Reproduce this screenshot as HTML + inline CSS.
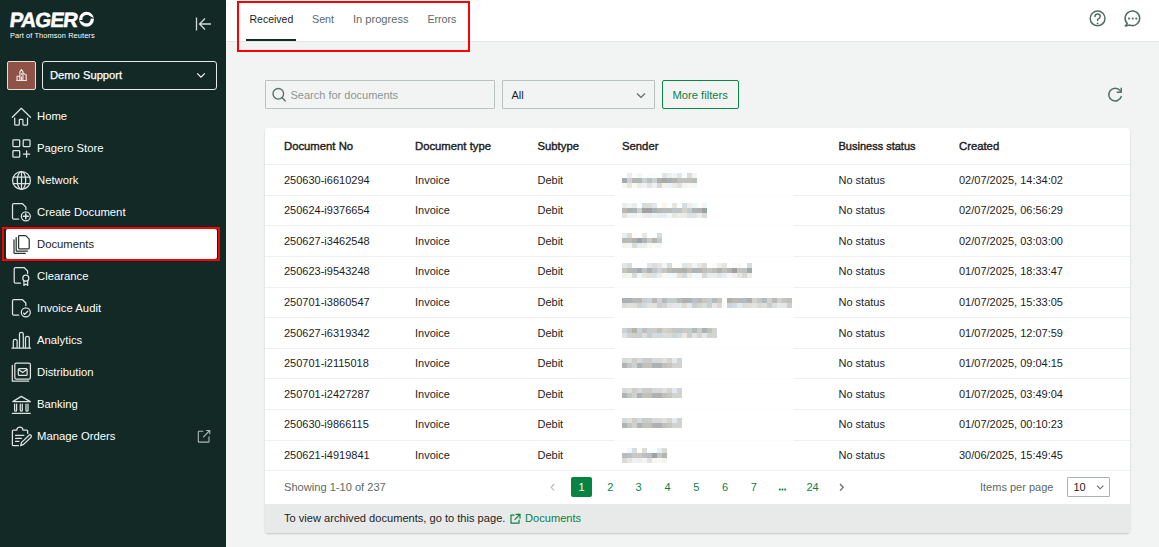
<!DOCTYPE html>
<html><head><meta charset="utf-8">
<style>
*{box-sizing:border-box;margin:0;padding:0}
html,body{width:1159px;height:547px;overflow:hidden}
body{background:#f2f4f3;font-family:"Liberation Sans",sans-serif;font-size:11px;color:#1d1d1d;position:relative}
.abs{position:absolute}
#side{position:absolute;left:0;top:0;width:226px;height:547px;background:#122926}
.nav{position:absolute;left:37px;color:#fff;font-size:11.3px;line-height:14px;white-space:nowrap}
#hdr{position:absolute;left:226px;top:0;width:933px;height:42px;background:#fff;border-bottom:1px solid #e2e6e4}
.tab{position:absolute;top:12px;font-size:11.2px;line-height:14px;color:#5d6a66;white-space:nowrap}
.th{position:absolute;top:139px;font-weight:normal;font-size:11.3px;line-height:14px;color:#1d1d1d;white-space:nowrap;-webkit-text-stroke:0.4px #1d1d1d}
.td{position:absolute;font-size:11px;line-height:14px;color:#1d1d1d;white-space:nowrap}
.sep{position:absolute;left:265px;width:865px;height:1px;background:#eef0ef}
.pg{position:absolute;top:480px;font-size:11px;line-height:14px;color:#0a7f45;text-align:center;width:20px;margin-left:-10px}
.blur{position:absolute;left:622px;height:15px}
.blur b{position:absolute;width:5px;height:5px}
svg{position:absolute;overflow:visible}
</style></head><body>

<div id="side">
  <!-- logo -->
  <div class="abs" style="left:8.7px;top:7.8px;font-weight:bold;font-size:20.6px;line-height:24px;color:#fff;letter-spacing:-0.85px;-webkit-text-stroke:0.5px #fff;transform:skewX(-7deg);transform-origin:0 19.7px">PAGER</div>
  <svg style="left:0;top:0" width="226" height="547" viewBox="0 0 226 547">
    <g fill="none" stroke="#fff">
      <circle cx="86.5" cy="19.2" r="5.8" stroke-width="3.3"/>
    </g>
    <path d="M94.5 18.6 L87.5 14.8 L86 18.8 Z M79 20.2 L85.5 23.2 L86.5 19.6 Z" fill="#122926"/>
    <!-- collapse -->
    <path d="M196.5 17.5v13M211 24H199.5M205 18.5L199.5 24l5.5 5.5" fill="none" stroke="#d5dad8" stroke-width="1.3"/>
    <g fill="none" stroke="#dfe3e1" stroke-width="1.25" stroke-linejoin="round" stroke-linecap="round">
      <!-- home -->
      <path d="M12.3 117.3L21.3 108.3L30.5 117.3"/>
      <path d="M14.7 118v6.3q0 .7.7.7h3.2q.7 0 .7-.7v-4.2q0-.7.7-.7h2.2q.7 0 .7.7v4.2q0 .7.7.7h3.2q.7 0 .7-.7V118"/>
      <!-- store -->
      <rect x="12.9" y="139.9" width="6.8" height="6.6" rx="0.8"/>
      <rect x="23.2" y="139.9" width="6.8" height="6.6" rx="0.8"/>
      <rect x="12.9" y="150.6" width="6.8" height="6.6" rx="0.8"/>
      <path d="M26.6 150.8v6.4M23.4 154h6.4"/>
      <!-- globe -->
      <circle cx="21.5" cy="180.4" r="8.9"/>
      <ellipse cx="21.5" cy="180.4" rx="4.2" ry="8.9"/>
      <path d="M21.5 171.5v17.8M13.3 177.1h16.4M13.3 183.7h16.4"/>
      <!-- create doc -->
      <path d="M25.9 209.6V207.1L22.5 203.7H13.7q-1.2 0-1.2 1.2v13.1q0 1.2 1.2 1.2h5"/>
      <circle cx="25.8" cy="216.3" r="4.5"/>
      <path d="M25.8 213.8v5M23.3 216.3h5" stroke-width="1.5"/>
      <!-- clearance -->
      <path d="M27.6 273.5V271L24.3 267.7H15.4q-1.2 0-1.2 1.2v13.1q0 1.2 1.2 1.2h5"/>
      <circle cx="25.8" cy="278.2" r="3"/>
      <path d="M23.9 280.8v4.6l1.9-1.3 1.9 1.3v-4.6"/>
      <!-- audit -->
      <path d="M25.8 305.5V303L22.5 299.7H13.7q-1.2 0-1.2 1.2v13.1q0 1.2 1.2 1.2h5"/>
      <circle cx="25.8" cy="312.3" r="4.5"/>
      <path d="M23.5 313.1l1.2 1.2 3.1-3.1"/>
      <!-- analytics -->
      <path d="M13.3 347.9v-7q0-1.5 1.9-1.5t1.9 1.5v7M19.5 347.9v-14q0-1.5 1.9-1.5t1.9 1.5v14M25.5 347.9v-10q0-1.5 1.9-1.5t1.9 1.5v10M12 348.2h18.6"/>
      <!-- distribution -->
      <rect x="14.8" y="363.2" width="15.6" height="16" rx="1.6"/>
      <path d="M12.3 365.3v15.9h16.4"/>
      <rect x="18.3" y="368.6" width="8.8" height="6.8" rx="1"/>
      <path d="M18.5 369.5l4.2 3 4.2-3"/>
      <!-- banking -->
      <path d="M12.8 401.6L21.3 396.4L30.3 401.6Z"/>
      <path d="M14.6 404v6.2q0 1 1 1t1-1V404M20.3 404v6.2q0 1 1 1t1-1V404M26 404v6.2q0 1 1 1t1-1V404M12.3 413.3h18"/>
      <!-- manage orders -->
      <path d="M16.7 430.1h-3.3q-1 0-1 1v13.6q0 1 1 1h5M23 430.1h3.7q1 0 1 1v2.3M16.7 430.1q.3-3 3.2-3t3.1 3"/>
      <path d="M15.6 435.4h8.2M15.6 438.4h5.8M15.6 441.4h3.3"/>
      <path d="M20.6 445.6l1-3.2 7.4-7.2q1-1 2 0t0 2l-7.4 7.2z"/>
      <!-- external -->
      <path d="M202.8 431.3H199q-.7 0-.7.7v9.4q0 .7.7.7h9.3q.7 0 .7-.7V436.8M206.6 430.5h3.2v3.2M209.7 430.5l-6.2 6.4" stroke="#aebab6" stroke-width="1.1"/>
    </g>
  </svg>
  <div class="abs" style="left:10px;top:32px;font-size:7.4px;line-height:8px;color:#fff;letter-spacing:0.1px">Part of Thomson Reuters</div>

  <!-- org -->
  <div class="abs" style="left:7px;top:61px;width:29px;height:29px;background:#8e5246;border:1px solid #e8ddd8;border-radius:2px"></div>
  <svg style="left:0;top:0" width="226" height="100" viewBox="0 0 226 100">
    <g fill="none" stroke="#f6eeea" stroke-width="1.1"><path d="M17.1 80.3V76.2h2.6M19.9 80.3V71.6l1.5-2 1.5 2v8.7M22.9 72.9l3.3 2.2v5.2M16.3 80.5h10.6"/><path d="M21.4 73.2v1.6M21.4 76.5v3.5" stroke-width="1"/></g>
  </svg>
  <div class="abs" style="left:42px;top:61px;width:175px;height:29px;border:1px solid #e6ebe8;border-radius:3px"></div>
  <svg style="left:0;top:0" width="226" height="100" viewBox="0 0 226 100"><path d="M197.2 73.4l3.8 3.8 3.8-3.8" fill="none" stroke="#fff" stroke-width="1.1"/></svg>
  <div class="abs" style="left:50px;top:68px;font-size:11.2px;line-height:14px;color:#fff;-webkit-text-stroke:0.25px #fff">Demo Support</div>

  <!-- nav items -->
  <div class="nav" style="top:109px">Home</div>
  <div class="nav" style="top:141px">Pagero Store</div>
  <div class="nav" style="top:173px">Network</div>
  <div class="nav" style="top:205px">Create Document</div>
  <div class="abs" style="left:2px;top:227px;width:218.2px;height:34px;border:2.4px solid #ff0000"></div><div class="abs" style="left:6px;top:229.2px;width:211px;height:29.5px;background:#fff;border-radius:2px"></div>
  <svg style="left:0;top:0" width="226" height="300" viewBox="0 0 226 300">
    <g fill="none" stroke="#2a3532" stroke-width="1.25" stroke-linejoin="round" stroke-linecap="round">
      <path d="M19.4 235.6H25.7L29.2 239.1V248q0 .8-.8.8H19.4q-.8 0-.8-.8V236.4q0-.8.8-.8z"/>
      <path d="M16.2 237.5v13.2q0 .4.4.4h10.9"/>
      <path d="M14 239.8v13q0 .5.5.5h10.8"/>
    </g>
  </svg>
  <div class="nav" style="top:237px;color:#1d1d1d">Documents</div>
  <div class="nav" style="top:269px">Clearance</div>
  <div class="nav" style="top:301px">Invoice Audit</div>
  <div class="nav" style="top:333px">Analytics</div>
  <div class="nav" style="top:365px">Distribution</div>
  <div class="nav" style="top:397px">Banking</div>
  <div class="nav" style="top:429px">Manage Orders</div>
</div>

<div id="hdr"></div>
<div class="tab" style="left:249.5px;color:#1d1d1d;font-size:10.5px">Received</div>
<div class="tab" style="left:312px;font-size:10.7px">Sent</div>
<div class="tab" style="left:353px;font-size:11.1px">In progress</div>
<div class="tab" style="left:427.5px;font-size:10.6px">Errors</div>
<div class="abs" style="left:246px;top:39px;width:50px;height:2px;background:#132a27"></div>
<div class="abs" style="left:237px;top:1px;width:233px;height:50.5px;border:2.2px solid #ff0000"></div>

<svg style="left:0;top:0" width="1159" height="547" viewBox="0 0 1159 547">
  <g fill="none" stroke="#506f67" stroke-width="1.5" stroke-linecap="round" stroke-linejoin="round">
    <circle cx="1097.6" cy="18.4" r="7.4"/>
    <path d="M1095 16.6q0-2.6 2.6-2.6t2.6 2.4q0 1.6-2.6 2.9v1.1"/>
    <path d="M1127.3 23.5A7.3 7.3 0 1 1 1129.8 25.1L1125.4 26Z"/>
    <path d="M1121.3 96.6A6.4 6.4 0 1 1 1120.2 90.6"/>
    <path d="M1117.2 92.2H1121.2V88.2"/>
  </g>
  <g fill="#55736b">
    <circle cx="1097.6" cy="23.4" r="0.95"/>
    <circle cx="1129" cy="18.6" r="1.1"/><circle cx="1132.7" cy="18.6" r="1.1"/><circle cx="1136.3" cy="18.6" r="1.1"/>
  </g>
</svg>

<!-- filters -->
<div class="abs" style="left:265px;top:80px;width:230px;height:29px;border:1px solid #b9c2bf;border-radius:1px"></div>
<svg style="left:0;top:0" width="1159" height="547" viewBox="0 0 1159 547">
  <g fill="none" stroke="#55736b" stroke-width="1.4" stroke-linecap="round">
    <circle cx="278.3" cy="93.8" r="5.3"/>
    <path d="M282.2 97.7l3 3.2"/>
  </g>
  <path d="M637 93.5l4 4 4-4" fill="none" stroke="#5d6a66" stroke-width="1.2"/>
</svg>
<div class="abs" style="left:290.5px;top:88px;font-size:11px;line-height:14px;color:#8b9693">Search for documents</div>
<div class="abs" style="left:502px;top:80px;width:153px;height:29px;border:1px solid #b9c2bf;border-radius:1px"></div>
<div class="abs" style="left:511.5px;top:88px;font-size:11px;line-height:14px;color:#1d1d1d">All</div>
<div class="abs" style="left:662px;top:80px;width:77px;height:29px;border:1.3px solid #0a8645;border-radius:2px"></div>
<div class="abs" style="left:672.5px;top:88px;font-size:11.2px;line-height:14px;color:#0b7f45">More filters</div>

<!-- table card -->
<div class="abs" style="left:265px;top:128px;width:865px;height:405px;background:#fff;border-radius:3px;box-shadow:0 1px 2px rgba(0,0,0,.18)"></div>
<div class="abs" style="left:265px;top:503.8px;width:865px;height:29.1px;background:#e7eae9;border-radius:0 0 3px 3px"></div>
<div class="th" style="left:284px">Document No</div>
<div class="th" style="left:415px">Document type</div>
<div class="th" style="left:537.5px">Subtype</div>
<div class="th" style="left:622px">Sender</div>
<div class="th" style="left:838.5px;font-size:11px">Business status</div>
<div class="th" style="left:959px">Created</div>
<div class="td" style="left:284px;top:172.69px">250630-i6610294</div>
<div class="td" style="left:415px;top:172.69px">Invoice</div>
<div class="td" style="left:537.5px;top:172.69px">Debit</div>
<div class="blur" style="top:173px;width:76px"><b style="left:0px;top:0px;background:#fffffd"></b><b style="left:5px;top:0px;background:#e8eef2"></b><b style="left:10px;top:0px;background:#fcfcf8"></b><b style="left:15px;top:0px;background:#f6f6f2"></b><b style="left:20px;top:0px;background:#fffffd"></b><b style="left:25px;top:0px;background:#f9ffff"></b><b style="left:30px;top:0px;background:#fcfcf8"></b><b style="left:35px;top:0px;background:#fbffff"></b><b style="left:40px;top:0px;background:#dee6e8"></b><b style="left:45px;top:0px;background:#eeeeea"></b><b style="left:50px;top:0px;background:#eef6f8"></b><b style="left:55px;top:0px;background:#e0e6ea"></b><b style="left:60px;top:0px;background:#fbffff"></b><b style="left:65px;top:0px;background:#dcdcd8"></b><b style="left:70px;top:0px;background:#f4f4f4"></b><b style="left:0px;top:5px;background:#a4aaae"></b><b style="left:5px;top:5px;background:#d0d0d0"></b><b style="left:10px;top:5px;background:#b6b6b6"></b><b style="left:15px;top:5px;background:#b0b8ba"></b><b style="left:20px;top:5px;background:#cad2d4"></b><b style="left:25px;top:5px;background:#b8c0c2"></b><b style="left:30px;top:5px;background:#cad2d4"></b><b style="left:35px;top:5px;background:#b2b0aa"></b><b style="left:40px;top:5px;background:#a8a8a8"></b><b style="left:45px;top:5px;background:#a8b0b2"></b><b style="left:50px;top:5px;background:#b6b4ae"></b><b style="left:55px;top:5px;background:#c2c0ba"></b><b style="left:60px;top:5px;background:#c0c0bc"></b><b style="left:65px;top:5px;background:#c0c0bc"></b><b style="left:70px;top:5px;background:#bcbcb8"></b><b style="left:0px;top:10px;background:#f6f6f2"></b><b style="left:5px;top:10px;background:#e8e6e0"></b><b style="left:10px;top:10px;background:#faf8f2"></b><b style="left:15px;top:10px;background:#eeece6"></b><b style="left:20px;top:10px;background:#ecf2f6"></b><b style="left:25px;top:10px;background:#e4e2dc"></b><b style="left:30px;top:10px;background:#f0f0f0"></b><b style="left:35px;top:10px;background:#d2dadc"></b><b style="left:40px;top:10px;background:#f4f2ec"></b><b style="left:45px;top:10px;background:#eaf2f4"></b><b style="left:50px;top:10px;background:#eaeaea"></b><b style="left:55px;top:10px;background:#dae2e4"></b><b style="left:60px;top:10px;background:#f4f4f4"></b><b style="left:65px;top:10px;background:#f8f8f4"></b><b style="left:70px;top:10px;background:#f0f8fa"></b></div>
<div class="td" style="left:838.5px;top:172.69px">No status</div>
<div class="td" style="left:959px;top:172.69px">02/07/2025, 14:34:02</div>
<div class="sep" style="top:164.30px;width:349px"></div><div class="sep" style="top:164.30px;left:794px;width:336px"></div><div class="sep" style="top:164.30px;left:614px;width:180px;background:#fbfcfc"></div>
<div class="td" style="left:284px;top:203.28px">250624-i9376654</div>
<div class="td" style="left:415px;top:203.28px">Invoice</div>
<div class="td" style="left:537.5px;top:203.28px">Debit</div>
<div class="blur" style="top:203px;width:85px"><b style="left:0px;top:0px;background:#ececec"></b><b style="left:5px;top:0px;background:#eef6f8"></b><b style="left:10px;top:0px;background:#ececec"></b><b style="left:15px;top:0px;background:#f9ffff"></b><b style="left:20px;top:0px;background:#d4dcde"></b><b style="left:25px;top:0px;background:#dedcd6"></b><b style="left:30px;top:0px;background:#e0e6ea"></b><b style="left:35px;top:0px;background:#fffffd"></b><b style="left:40px;top:0px;background:#f8f6f0"></b><b style="left:45px;top:0px;background:#fbffff"></b><b style="left:50px;top:0px;background:#e8e6e0"></b><b style="left:55px;top:0px;background:#f9ffff"></b><b style="left:60px;top:0px;background:#d6dce0"></b><b style="left:65px;top:0px;background:#f0eee8"></b><b style="left:70px;top:0px;background:#eef6f8"></b><b style="left:75px;top:0px;background:#fefcf6"></b><b style="left:80px;top:0px;background:#f0f6fa"></b><b style="left:0px;top:5px;background:#bab8b2"></b><b style="left:5px;top:5px;background:#a8b0b2"></b><b style="left:10px;top:5px;background:#acb4b6"></b><b style="left:15px;top:5px;background:#cad2d4"></b><b style="left:20px;top:5px;background:#a2a29e"></b><b style="left:25px;top:5px;background:#9ca2a6"></b><b style="left:30px;top:5px;background:#aab0b4"></b><b style="left:35px;top:5px;background:#b8b8b4"></b><b style="left:40px;top:5px;background:#b6bcc0"></b><b style="left:45px;top:5px;background:#bcbcb8"></b><b style="left:50px;top:5px;background:#bcc4c6"></b><b style="left:55px;top:5px;background:#c2c2c2"></b><b style="left:60px;top:5px;background:#d4d2cc"></b><b style="left:65px;top:5px;background:#c4cace"></b><b style="left:70px;top:5px;background:#acb4b6"></b><b style="left:75px;top:5px;background:#b2b2b2"></b><b style="left:80px;top:5px;background:#9aa2a4"></b><b style="left:0px;top:10px;background:#e2e2de"></b><b style="left:5px;top:10px;background:#f2f2ee"></b><b style="left:10px;top:10px;background:#ecf2f6"></b><b style="left:15px;top:10px;background:#f6f6f2"></b><b style="left:20px;top:10px;background:#eeeeea"></b><b style="left:25px;top:10px;background:#eaeaea"></b><b style="left:30px;top:10px;background:#eaf2f4"></b><b style="left:35px;top:10px;background:#e6ecf0"></b><b style="left:40px;top:10px;background:#e6eef0"></b><b style="left:45px;top:10px;background:#eef6f8"></b><b style="left:50px;top:10px;background:#e8e6e0"></b><b style="left:55px;top:10px;background:#ecece8"></b><b style="left:60px;top:10px;background:#eaeaea"></b><b style="left:65px;top:10px;background:#dae2e4"></b><b style="left:70px;top:10px;background:#dce2e6"></b><b style="left:75px;top:10px;background:#e6ecf0"></b><b style="left:80px;top:10px;background:#dcdad4"></b></div>
<div class="td" style="left:838.5px;top:203.28px">No status</div>
<div class="td" style="left:959px;top:203.28px">02/07/2025, 06:56:29</div>
<div class="sep" style="top:194.89px;width:349px"></div><div class="sep" style="top:194.89px;left:794px;width:336px"></div><div class="sep" style="top:194.89px;left:614px;width:180px;background:#fbfcfc"></div>
<div class="td" style="left:284px;top:233.88px">250627-i3462548</div>
<div class="td" style="left:415px;top:233.88px">Invoice</div>
<div class="td" style="left:537.5px;top:233.88px">Debit</div>
<div class="blur" style="top:233px;width:41px"><b style="left:0px;top:0px;background:#e6eef0"></b><b style="left:5px;top:0px;background:#dedcd6"></b><b style="left:10px;top:0px;background:#fefcf6"></b><b style="left:15px;top:0px;background:#fffffd"></b><b style="left:20px;top:0px;background:#e8e6e0"></b><b style="left:25px;top:0px;background:#ffffff"></b><b style="left:30px;top:0px;background:#f9ffff"></b><b style="left:35px;top:0px;background:#d4dcde"></b><b style="left:0px;top:5px;background:#b8b8b4"></b><b style="left:5px;top:5px;background:#b4bcbe"></b><b style="left:10px;top:5px;background:#b0b0ac"></b><b style="left:15px;top:5px;background:#9ca2a6"></b><b style="left:20px;top:5px;background:#aeb4b8"></b><b style="left:25px;top:5px;background:#cacac6"></b><b style="left:30px;top:5px;background:#b6b4ae"></b><b style="left:35px;top:5px;background:#c8c8c8"></b><b style="left:0px;top:10px;background:#f4f2ec"></b><b style="left:5px;top:10px;background:#f4f4f4"></b><b style="left:10px;top:10px;background:#dadad6"></b><b style="left:15px;top:10px;background:#e4ecee"></b><b style="left:20px;top:10px;background:#ececec"></b><b style="left:25px;top:10px;background:#f8f6f0"></b><b style="left:30px;top:10px;background:#faf8f2"></b><b style="left:35px;top:10px;background:#f0f8fa"></b></div>
<div class="td" style="left:838.5px;top:233.88px">No status</div>
<div class="td" style="left:959px;top:233.88px">02/07/2025, 03:03:00</div>
<div class="sep" style="top:225.48px;width:349px"></div><div class="sep" style="top:225.48px;left:794px;width:336px"></div><div class="sep" style="top:225.48px;left:614px;width:180px;background:#fbfcfc"></div>
<div class="td" style="left:284px;top:264.47px">250623-i9543248</div>
<div class="td" style="left:415px;top:264.47px">Invoice</div>
<div class="td" style="left:537.5px;top:264.47px">Debit</div>
<div class="blur" style="top:263px;width:130px"><b style="left:0px;top:0px;background:#dee6e8"></b><b style="left:5px;top:0px;background:#dcdcd8"></b><b style="left:10px;top:0px;background:#fbffff"></b><b style="left:15px;top:0px;background:#fbffff"></b><b style="left:20px;top:0px;background:#ffffff"></b><b style="left:25px;top:0px;background:#e0e6ea"></b><b style="left:30px;top:0px;background:#dedcd6"></b><b style="left:35px;top:0px;background:#e4e4e4"></b><b style="left:40px;top:0px;background:#eef6f8"></b><b style="left:45px;top:0px;background:#dadada"></b><b style="left:50px;top:0px;background:#fffffd"></b><b style="left:55px;top:0px;background:#f9ffff"></b><b style="left:60px;top:0px;background:#dee6e8"></b><b style="left:65px;top:0px;background:#e8e6e0"></b><b style="left:70px;top:0px;background:#f4f4f4"></b><b style="left:75px;top:0px;background:#e8e6e0"></b><b style="left:80px;top:0px;background:#dcdcd8"></b><b style="left:85px;top:0px;background:#fffffb"></b><b style="left:90px;top:0px;background:#fafafa"></b><b style="left:95px;top:0px;background:#f0eee8"></b><b style="left:100px;top:0px;background:#e4e4e4"></b><b style="left:105px;top:0px;background:#fffffb"></b><b style="left:110px;top:0px;background:#fafafa"></b><b style="left:115px;top:0px;background:#fafafa"></b><b style="left:120px;top:0px;background:#fffffd"></b><b style="left:125px;top:0px;background:#d6dce0"></b><b style="left:0px;top:5px;background:#c6c4be"></b><b style="left:5px;top:5px;background:#b8b8b4"></b><b style="left:10px;top:5px;background:#b2b8bc"></b><b style="left:15px;top:5px;background:#aaaaa6"></b><b style="left:20px;top:5px;background:#bec4c8"></b><b style="left:25px;top:5px;background:#b2b0aa"></b><b style="left:30px;top:5px;background:#bec4c8"></b><b style="left:35px;top:5px;background:#ccd2d6"></b><b style="left:40px;top:5px;background:#c4c4c0"></b><b style="left:45px;top:5px;background:#b8b8b4"></b><b style="left:50px;top:5px;background:#b4b4b0"></b><b style="left:55px;top:5px;background:#b2b2b2"></b><b style="left:60px;top:5px;background:#b2b0aa"></b><b style="left:65px;top:5px;background:#bcbcb8"></b><b style="left:70px;top:5px;background:#acb4b6"></b><b style="left:75px;top:5px;background:#b6b4ae"></b><b style="left:80px;top:5px;background:#bebebe"></b><b style="left:85px;top:5px;background:#c6c4be"></b><b style="left:90px;top:5px;background:#bebcb6"></b><b style="left:95px;top:5px;background:#b0b0ac"></b><b style="left:100px;top:5px;background:#c2c0ba"></b><b style="left:105px;top:5px;background:#b6b4ae"></b><b style="left:110px;top:5px;background:#a0a0a0"></b><b style="left:115px;top:5px;background:#c6c4be"></b><b style="left:120px;top:5px;background:#bcc4c6"></b><b style="left:125px;top:5px;background:#a8a8a8"></b><b style="left:0px;top:10px;background:#f4f2ec"></b><b style="left:5px;top:10px;background:#eef6f8"></b><b style="left:10px;top:10px;background:#dadad6"></b><b style="left:15px;top:10px;background:#eef6f8"></b><b style="left:20px;top:10px;background:#e8e6e0"></b><b style="left:25px;top:10px;background:#e4e2dc"></b><b style="left:30px;top:10px;background:#dce2e6"></b><b style="left:35px;top:10px;background:#ececec"></b><b style="left:40px;top:10px;background:#faf8f2"></b><b style="left:45px;top:10px;background:#f0f8fa"></b><b style="left:50px;top:10px;background:#eef6f8"></b><b style="left:55px;top:10px;background:#e4e2dc"></b><b style="left:60px;top:10px;background:#d2dadc"></b><b style="left:65px;top:10px;background:#f0eee8"></b><b style="left:70px;top:10px;background:#f0f8fa"></b><b style="left:75px;top:10px;background:#f0f8fa"></b><b style="left:80px;top:10px;background:#d8d8d8"></b><b style="left:85px;top:10px;background:#e6ecf0"></b><b style="left:90px;top:10px;background:#ecece8"></b><b style="left:95px;top:10px;background:#dee6e8"></b><b style="left:100px;top:10px;background:#e6ecf0"></b><b style="left:105px;top:10px;background:#f6f6f6"></b><b style="left:110px;top:10px;background:#f0f0f0"></b><b style="left:115px;top:10px;background:#e4e4e4"></b><b style="left:120px;top:10px;background:#d8d8d8"></b><b style="left:125px;top:10px;background:#eeece6"></b></div>
<div class="td" style="left:838.5px;top:264.47px">No status</div>
<div class="td" style="left:959px;top:264.47px">01/07/2025, 18:33:47</div>
<div class="sep" style="top:256.07px;width:349px"></div><div class="sep" style="top:256.07px;left:794px;width:336px"></div><div class="sep" style="top:256.07px;left:614px;width:180px;background:#fbfcfc"></div>
<div class="td" style="left:284px;top:295.06px">250701-i3860547</div>
<div class="td" style="left:415px;top:295.06px">Invoice</div>
<div class="td" style="left:537.5px;top:295.06px">Debit</div>
<div class="blur" style="top:298px;width:171px"><b style="left:0px;top:0px;background:#aab2b4"></b><b style="left:5px;top:0px;background:#aab2b4"></b><b style="left:10px;top:0px;background:#b8b8b8"></b><b style="left:15px;top:0px;background:#b8b8b8"></b><b style="left:20px;top:0px;background:#c6ccd0"></b><b style="left:25px;top:0px;background:#ccd2d6"></b><b style="left:30px;top:0px;background:#b8b8b8"></b><b style="left:35px;top:0px;background:#d0d0d0"></b><b style="left:40px;top:0px;background:#b4babe"></b><b style="left:45px;top:0px;background:#c4ccce"></b><b style="left:50px;top:0px;background:#c4ccce"></b><b style="left:55px;top:0px;background:#babab6"></b><b style="left:60px;top:0px;background:#b0b0b0"></b><b style="left:65px;top:0px;background:#aab2b4"></b><b style="left:70px;top:0px;background:#bac0c4"></b><b style="left:75px;top:0px;background:#bcbab4"></b><b style="left:80px;top:0px;background:#c8c6c0"></b><b style="left:85px;top:0px;background:#c6ccd0"></b><b style="left:90px;top:0px;background:#b4babe"></b><b style="left:95px;top:0px;background:#c6c6c2"></b><b style="left:100px;top:0px;background:#fcfcf8"></b><b style="left:105px;top:0px;background:#b0b0b0"></b><b style="left:110px;top:0px;background:#bcbab4"></b><b style="left:115px;top:0px;background:#b4babe"></b><b style="left:120px;top:0px;background:#b2babc"></b><b style="left:125px;top:0px;background:#b0b0b0"></b><b style="left:130px;top:0px;background:#d2d2ce"></b><b style="left:135px;top:0px;background:#c0c6ca"></b><b style="left:140px;top:0px;background:#b2babc"></b><b style="left:145px;top:0px;background:#d4d2cc"></b><b style="left:150px;top:0px;background:#bcbab4"></b><b style="left:155px;top:0px;background:#ccd2d6"></b><b style="left:160px;top:0px;background:#c4c4c4"></b><b style="left:165px;top:0px;background:#c2c0ba"></b><b style="left:0px;top:5px;background:#dcdad4"></b><b style="left:5px;top:5px;background:#dae2e4"></b><b style="left:10px;top:5px;background:#e0ded8"></b><b style="left:15px;top:5px;background:#d2d2d2"></b><b style="left:20px;top:5px;background:#d4dade"></b><b style="left:25px;top:5px;background:#e2e2de"></b><b style="left:30px;top:5px;background:#e4e2dc"></b><b style="left:35px;top:5px;background:#c8ced2"></b><b style="left:40px;top:5px;background:#d2d2d2"></b><b style="left:45px;top:5px;background:#e4e2dc"></b><b style="left:50px;top:5px;background:#e6e6e6"></b><b style="left:55px;top:5px;background:#e0e8ea"></b><b style="left:60px;top:5px;background:#dcdad4"></b><b style="left:65px;top:5px;background:#e2e8ec"></b><b style="left:70px;top:5px;background:#c6ced0"></b><b style="left:75px;top:5px;background:#d6d4ce"></b><b style="left:80px;top:5px;background:#d6dee0"></b><b style="left:85px;top:5px;background:#cececa"></b><b style="left:90px;top:5px;background:#e6e6e6"></b><b style="left:95px;top:5px;background:#d8d8d8"></b><b style="left:100px;top:5px;background:#fafafa"></b><b style="left:105px;top:5px;background:#ced4d8"></b><b style="left:110px;top:5px;background:#d4dade"></b><b style="left:115px;top:5px;background:#e2e8ec"></b><b style="left:120px;top:5px;background:#dcdcdc"></b><b style="left:125px;top:5px;background:#dededa"></b><b style="left:130px;top:5px;background:#e4e2dc"></b><b style="left:135px;top:5px;background:#dadad6"></b><b style="left:140px;top:5px;background:#dededa"></b><b style="left:145px;top:5px;background:#cccccc"></b><b style="left:150px;top:5px;background:#d8dee2"></b><b style="left:155px;top:5px;background:#e8e8e4"></b><b style="left:160px;top:5px;background:#e0e8ea"></b><b style="left:165px;top:5px;background:#d0cec8"></b></div>
<div class="td" style="left:838.5px;top:295.06px">No status</div>
<div class="td" style="left:959px;top:295.06px">01/07/2025, 15:33:05</div>
<div class="sep" style="top:286.66px;width:349px"></div><div class="sep" style="top:286.66px;left:794px;width:336px"></div><div class="sep" style="top:286.66px;left:614px;width:180px;background:#fbfcfc"></div>
<div class="td" style="left:284px;top:325.65px">250627-i6319342</div>
<div class="td" style="left:415px;top:325.65px">Invoice</div>
<div class="td" style="left:537.5px;top:325.65px">Debit</div>
<div class="blur" style="top:328px;width:95px"><b style="left:0px;top:0px;background:#cad2d4"></b><b style="left:5px;top:0px;background:#c4c4c4"></b><b style="left:10px;top:0px;background:#b4b2ac"></b><b style="left:15px;top:0px;background:#cad2d4"></b><b style="left:20px;top:0px;background:#bebebe"></b><b style="left:25px;top:0px;background:#c6ccd0"></b><b style="left:30px;top:0px;background:#ceccc6"></b><b style="left:35px;top:0px;background:#c2c0ba"></b><b style="left:40px;top:0px;background:#d4d2cc"></b><b style="left:45px;top:0px;background:#ceccc6"></b><b style="left:50px;top:0px;background:#c6c6c2"></b><b style="left:55px;top:0px;background:#c0c6ca"></b><b style="left:60px;top:0px;background:#cacaca"></b><b style="left:65px;top:0px;background:#c4ccce"></b><b style="left:70px;top:0px;background:#b2babc"></b><b style="left:75px;top:0px;background:#c6ccd0"></b><b style="left:80px;top:0px;background:#aab2b4"></b><b style="left:85px;top:0px;background:#c0c0bc"></b><b style="left:90px;top:0px;background:#d2d2ce"></b><b style="left:0px;top:5px;background:#e0e0e0"></b><b style="left:5px;top:5px;background:#ccd4d6"></b><b style="left:10px;top:5px;background:#d0cec8"></b><b style="left:15px;top:5px;background:#c8ced2"></b><b style="left:20px;top:5px;background:#dcdcdc"></b><b style="left:25px;top:5px;background:#c6ced0"></b><b style="left:30px;top:5px;background:#d4dade"></b><b style="left:35px;top:5px;background:#d2dadc"></b><b style="left:40px;top:5px;background:#d6dee0"></b><b style="left:45px;top:5px;background:#dcdad4"></b><b style="left:50px;top:5px;background:#ccd4d6"></b><b style="left:55px;top:5px;background:#d4dade"></b><b style="left:60px;top:5px;background:#eae8e2"></b><b style="left:65px;top:5px;background:#c8ced2"></b><b style="left:70px;top:5px;background:#e2e2de"></b><b style="left:75px;top:5px;background:#d6d4ce"></b><b style="left:80px;top:5px;background:#e6e6e6"></b><b style="left:85px;top:5px;background:#ccd4d6"></b><b style="left:90px;top:5px;background:#d6d4ce"></b></div>
<div class="td" style="left:838.5px;top:325.65px">No status</div>
<div class="td" style="left:959px;top:325.65px">01/07/2025, 12:07:59</div>
<div class="sep" style="top:317.25px;width:349px"></div><div class="sep" style="top:317.25px;left:794px;width:336px"></div><div class="sep" style="top:317.25px;left:614px;width:180px;background:#fbfcfc"></div>
<div class="td" style="left:284px;top:356.24px">250701-i2115018</div>
<div class="td" style="left:415px;top:356.24px">Invoice</div>
<div class="td" style="left:537.5px;top:356.24px">Debit</div>
<div class="blur" style="top:358px;width:61px"><b style="left:0px;top:0px;background:#d2dadc"></b><b style="left:5px;top:0px;background:#e0ded8"></b><b style="left:10px;top:0px;background:#d0cec8"></b><b style="left:15px;top:0px;background:#d8d8d8"></b><b style="left:20px;top:0px;background:#c6ced0"></b><b style="left:25px;top:0px;background:#cccccc"></b><b style="left:30px;top:0px;background:#d8d8d8"></b><b style="left:35px;top:0px;background:#d8d8d8"></b><b style="left:40px;top:0px;background:#e0e0e0"></b><b style="left:45px;top:0px;background:#d6d4ce"></b><b style="left:50px;top:0px;background:#e2e8ec"></b><b style="left:55px;top:0px;background:#ccd4d6"></b><b style="left:0px;top:5px;background:#b2b2ae"></b><b style="left:5px;top:5px;background:#c0c6ca"></b><b style="left:10px;top:5px;background:#d0d0d0"></b><b style="left:15px;top:5px;background:#acb2b6"></b><b style="left:20px;top:5px;background:#c2c0ba"></b><b style="left:25px;top:5px;background:#c2c0ba"></b><b style="left:30px;top:5px;background:#aab2b4"></b><b style="left:35px;top:5px;background:#b0b0b0"></b><b style="left:40px;top:5px;background:#c2c0ba"></b><b style="left:45px;top:5px;background:#c6c6c2"></b><b style="left:50px;top:5px;background:#d2d2ce"></b><b style="left:55px;top:5px;background:#d2d2ce"></b></div>
<div class="td" style="left:838.5px;top:356.24px">No status</div>
<div class="td" style="left:959px;top:356.24px">01/07/2025, 09:04:15</div>
<div class="sep" style="top:347.84px;width:349px"></div><div class="sep" style="top:347.84px;left:794px;width:336px"></div><div class="sep" style="top:347.84px;left:614px;width:180px;background:#fbfcfc"></div>
<div class="td" style="left:284px;top:386.83px">250701-i2427287</div>
<div class="td" style="left:415px;top:386.83px">Invoice</div>
<div class="td" style="left:537.5px;top:386.83px">Debit</div>
<div class="blur" style="top:388px;width:61px"><b style="left:0px;top:0px;background:#d2dadc"></b><b style="left:5px;top:0px;background:#e0ded8"></b><b style="left:10px;top:0px;background:#d0cec8"></b><b style="left:15px;top:0px;background:#d8d8d8"></b><b style="left:20px;top:0px;background:#c6ced0"></b><b style="left:25px;top:0px;background:#cccccc"></b><b style="left:30px;top:0px;background:#d8d8d8"></b><b style="left:35px;top:0px;background:#d8d8d8"></b><b style="left:40px;top:0px;background:#e0e0e0"></b><b style="left:45px;top:0px;background:#d6d4ce"></b><b style="left:50px;top:0px;background:#e2e8ec"></b><b style="left:55px;top:0px;background:#ccd4d6"></b><b style="left:0px;top:5px;background:#b2b2ae"></b><b style="left:5px;top:5px;background:#c0c6ca"></b><b style="left:10px;top:5px;background:#d0d0d0"></b><b style="left:15px;top:5px;background:#acb2b6"></b><b style="left:20px;top:5px;background:#c2c0ba"></b><b style="left:25px;top:5px;background:#c2c0ba"></b><b style="left:30px;top:5px;background:#aab2b4"></b><b style="left:35px;top:5px;background:#b0b0b0"></b><b style="left:40px;top:5px;background:#c2c0ba"></b><b style="left:45px;top:5px;background:#c6c6c2"></b><b style="left:50px;top:5px;background:#d2d2ce"></b><b style="left:55px;top:5px;background:#d2d2ce"></b></div>
<div class="td" style="left:838.5px;top:386.83px">No status</div>
<div class="td" style="left:959px;top:386.83px">01/07/2025, 03:49:04</div>
<div class="sep" style="top:378.43px;width:349px"></div><div class="sep" style="top:378.43px;left:794px;width:336px"></div><div class="sep" style="top:378.43px;left:614px;width:180px;background:#fbfcfc"></div>
<div class="td" style="left:284px;top:417.42px">250630-i9866115</div>
<div class="td" style="left:415px;top:417.42px">Invoice</div>
<div class="td" style="left:537.5px;top:417.42px">Debit</div>
<div class="blur" style="top:418px;width:61px"><b style="left:0px;top:0px;background:#d2dadc"></b><b style="left:5px;top:0px;background:#e0ded8"></b><b style="left:10px;top:0px;background:#d0cec8"></b><b style="left:15px;top:0px;background:#d8d8d8"></b><b style="left:20px;top:0px;background:#c6ced0"></b><b style="left:25px;top:0px;background:#cccccc"></b><b style="left:30px;top:0px;background:#d8d8d8"></b><b style="left:35px;top:0px;background:#d8d8d8"></b><b style="left:40px;top:0px;background:#e0e0e0"></b><b style="left:45px;top:0px;background:#d6d4ce"></b><b style="left:50px;top:0px;background:#e2e8ec"></b><b style="left:55px;top:0px;background:#ccd4d6"></b><b style="left:0px;top:5px;background:#b2b2ae"></b><b style="left:5px;top:5px;background:#c0c6ca"></b><b style="left:10px;top:5px;background:#d0d0d0"></b><b style="left:15px;top:5px;background:#acb2b6"></b><b style="left:20px;top:5px;background:#c2c0ba"></b><b style="left:25px;top:5px;background:#c2c0ba"></b><b style="left:30px;top:5px;background:#aab2b4"></b><b style="left:35px;top:5px;background:#b0b0b0"></b><b style="left:40px;top:5px;background:#c2c0ba"></b><b style="left:45px;top:5px;background:#c6c6c2"></b><b style="left:50px;top:5px;background:#d2d2ce"></b><b style="left:55px;top:5px;background:#d2d2ce"></b></div>
<div class="td" style="left:838.5px;top:417.42px">No status</div>
<div class="td" style="left:959px;top:417.42px">01/07/2025, 00:10:23</div>
<div class="sep" style="top:409.02px;width:349px"></div><div class="sep" style="top:409.02px;left:794px;width:336px"></div><div class="sep" style="top:409.02px;left:614px;width:180px;background:#fbfcfc"></div>
<div class="td" style="left:284px;top:448.01px">250621-i4919841</div>
<div class="td" style="left:415px;top:448.01px">Invoice</div>
<div class="td" style="left:537.5px;top:448.01px">Debit</div>
<div class="blur" style="top:448px;width:46px"><b style="left:0px;top:0px;background:#fffffb"></b><b style="left:5px;top:0px;background:#f0f6fa"></b><b style="left:10px;top:0px;background:#d4dcde"></b><b style="left:15px;top:0px;background:#fefcf6"></b><b style="left:20px;top:0px;background:#dcdcd8"></b><b style="left:25px;top:0px;background:#f9ffff"></b><b style="left:30px;top:0px;background:#f9ffff"></b><b style="left:35px;top:0px;background:#e8eef2"></b><b style="left:40px;top:0px;background:#dadada"></b><b style="left:0px;top:5px;background:#b6bcc0"></b><b style="left:5px;top:5px;background:#b8c0c2"></b><b style="left:10px;top:5px;background:#c8c8c8"></b><b style="left:15px;top:5px;background:#c8c8c8"></b><b style="left:20px;top:5px;background:#bac0c4"></b><b style="left:25px;top:5px;background:#bababa"></b><b style="left:30px;top:5px;background:#9ca2a6"></b><b style="left:35px;top:5px;background:#c4c4c0"></b><b style="left:40px;top:5px;background:#b6b4ae"></b><b style="left:0px;top:10px;background:#dcdad4"></b><b style="left:5px;top:10px;background:#e8e6e0"></b><b style="left:10px;top:10px;background:#ecf2f6"></b><b style="left:15px;top:10px;background:#f0eee8"></b><b style="left:20px;top:10px;background:#f4f4f4"></b><b style="left:25px;top:10px;background:#e0e0e0"></b><b style="left:30px;top:10px;background:#f8f6f0"></b><b style="left:35px;top:10px;background:#f8f8f4"></b><b style="left:40px;top:10px;background:#f4f2ec"></b></div>
<div class="td" style="left:838.5px;top:448.01px">No status</div>
<div class="td" style="left:959px;top:448.01px">30/06/2025, 15:49:45</div>
<div class="sep" style="top:439.61px;width:349px"></div><div class="sep" style="top:439.61px;left:794px;width:336px"></div><div class="sep" style="top:439.61px;left:614px;width:180px;background:#fbfcfc"></div>
<div class="sep" style="top:470.20px"></div><div class="sep" style="top:164.30px"></div>


<div class="abs" style="left:284px;top:480px;font-size:11.1px;line-height:14px;color:#5d6a66">Showing 1-10 of 237</div>
<svg style="left:0;top:0" width="1159" height="547" viewBox="0 0 1159 547">
  <path d="M554.3 484l-3.2 3.3 3.2 3.3" fill="none" stroke="#b5bdba" stroke-width="1.1"/>
  <path d="M840 484l3.2 3.3-3.2 3.3" fill="none" stroke="#56655f" stroke-width="1.2"/>
  <path d="M1097 485.6l3.2 3.2 3.2-3.2" fill="none" stroke="#5d6a66" stroke-width="1.1"/>
  <g fill="none" stroke="#0c7f45" stroke-width="1.2" stroke-linecap="round">
    <path d="M514 515.1h-3v8h8v-3M516 514.3h4v4M520 514.3l-5 5"/>
  </g>
</svg>
<div class="abs" style="left:571px;top:477px;width:21px;height:20px;background:#078443;border-radius:2px"></div>
<div class="pg" style="left:581.5px;color:#fff">1</div>
<div class="pg" style="left:610.3px">2</div>
<div class="pg" style="left:638.5px">3</div>
<div class="pg" style="left:667.5px">4</div>
<div class="pg" style="left:696.3px">5</div>
<div class="pg" style="left:725px">6</div>
<div class="pg" style="left:753.8px">7</div>
<svg style="left:0;top:0" width="1159" height="547"><g fill="#0c7f45"><rect x="778.9" y="488.6" width="1.8" height="1.8"/><rect x="781.6" y="488.6" width="1.8" height="1.8"/><rect x="784.3" y="488.6" width="1.8" height="1.8"/></g></svg>
<div class="pg" style="left:812.5px">24</div>
<div class="abs" style="left:980px;top:480px;font-size:11px;line-height:14px;color:#5d6a66">Items per page</div>
<div class="abs" style="left:1067px;top:477px;width:43px;height:20px;border:1px solid #a9b3b0;border-radius:1px"></div>
<div class="abs" style="left:1073.5px;top:479.6px;font-size:11px;line-height:14px;color:#1d1d1d">10</div>

<div class="abs" style="left:284px;top:511px;font-size:11.1px;line-height:14px;color:#1d1d1d">To view archived documents, go to this page.</div>
<div class="abs" style="left:525px;top:511px;font-size:11.1px;line-height:14px;color:#0c7f45">Documents</div>

</body></html>
